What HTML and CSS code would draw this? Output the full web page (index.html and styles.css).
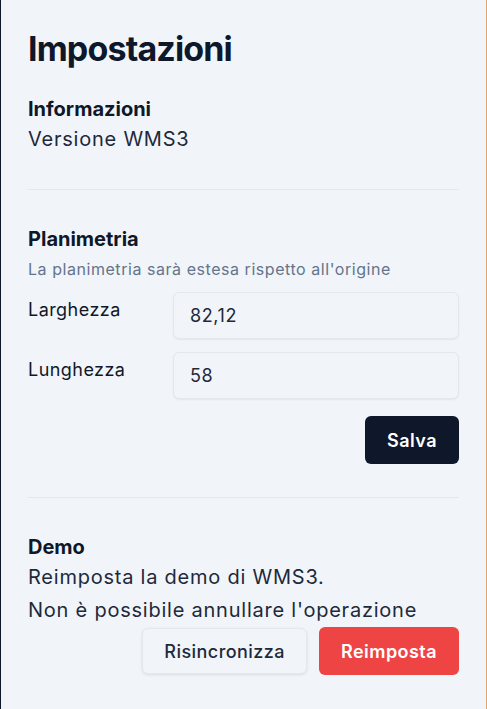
FILE: index.html
```html
<!DOCTYPE html>
<html lang="it">
<head>
<meta charset="utf-8">
<title>Impostazioni</title>
<link rel="stylesheet" href="styles.css">
</head>
<body>
<div class="panel">
  <h1 class="title">Impostazioni</h1>

  <section class="section section-first">
    <h2 class="section-title">Informazioni</h2>
    <p class="text">Versione WMS3</p>
  </section>

  <hr class="divider">

  <section class="section">
    <h2 class="section-title">Planimetria</h2>
    <p class="hint">La planimetria sarà estesa rispetto all'origine</p>
    <div class="form">
      <label class="label" for="w">Larghezza</label>
      <input class="input" id="w" type="text" value="82,12">
      <label class="label" for="l">Lunghezza</label>
      <input class="input" id="l" type="text" value="58">
    </div>
    <div class="actions actions-save">
      <button class="btn btn-dark">Salva</button>
    </div>
  </section>

  <hr class="divider divider-second">

  <section class="section">
    <h2 class="section-title">Demo</h2>
    <p class="text">Reimposta la demo di WMS3.</p>
    <p class="text">Non è possibile annullare l'operazione</p>
    <div class="actions actions-demo">
      <button class="btn btn-light">Risincronizza</button>
      <button class="btn btn-red">Reimposta</button>
    </div>
  </section>
</div>
</body>
</html>
```

FILE: styles.css
```css
* { box-sizing: border-box; }
html, body { margin: 0; padding: 0; }
body {
  font-family: Inter, "Noto Sans", sans-serif;
  color: #0f172a;
  background: #f1f5f9;
}
.panel {
  min-height: 100vh;
  background: #f1f5f9;
  border-left: 1px solid #0f172a;
  border-right: 1px solid #e3a56b;
  padding: 29px 27px 0 27px;
}
.title {
  margin: 0;
  font-size: 34px;
  line-height: 40px;
  font-weight: 700;
  letter-spacing: -0.85px;
  color: #0f172a;
}
.section { margin-top: 35px; }
.section-first { margin-top: 26px; }
.section-title {
  margin: 0;
  font-size: 20px;
  line-height: 28px;
  font-weight: 700;
  color: #0f172a;
}
.text {
  margin: 0;
  font-size: 20px;
  line-height: 33px;
  letter-spacing: 0.77px;
  color: #1e293b;
}
.divider {
  border: 0;
  border-top: 1px solid #e2e8f0;
  margin: 33px 0 0;
}
.hint {
  margin: 4px 0 0;
  font-size: 16px;
  line-height: 24px;
  letter-spacing: 0.55px;
  color: #64748b;
}
.form {
  margin-top: 11px;
  display: grid;
  grid-template-columns: 145px 1fr;
  row-gap: 13px;
}
.label {
  padding-top: 4px;
  font-size: 18px;
  line-height: 28px;
  letter-spacing: 0.45px;
  color: #0f172a;
}
.input {
  height: 47px;
  width: 100%;
  padding: 0 16px;
  font-family: inherit;
  font-size: 18px;
  letter-spacing: 0.6px;
  color: #1e293b;
  background: #f1f5f9;
  border: 1px solid #e2e8f0;
  border-radius: 6px;
  box-shadow: 0 1px 2px rgba(15, 23, 42, 0.06);
  outline: none;
}
.actions {
  display: flex;
  justify-content: flex-end;
  align-items: center;
  gap: 12px;
}
.actions-save { margin-top: 17px; }
.actions-demo { margin-top: 0; }
.btn {
  font-family: inherit;
  font-size: 18px;
  font-weight: 600;
  letter-spacing: 0.45px;
  border-radius: 6px;
  height: 48px;
  padding: 0 22px;
  border: 0;
  cursor: pointer;
}
.btn-dark { background: #0f172a; color: #fff; }
.btn-red { background: #ef4444; color: #fff; }
.btn-light {
  background: #f1f5f9;
  color: #1e293b;
  font-weight: 500;
  height: 46px;
  padding: 0 21px;
  border: 1px solid #e2e8f0;
  box-shadow: 0 1px 3px rgba(15, 23, 42, 0.1);
}
```
